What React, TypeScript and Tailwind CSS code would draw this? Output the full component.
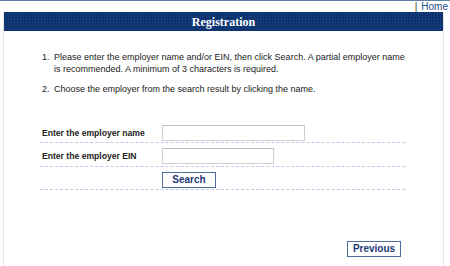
import React from "react";

export default function App() {
  return (
    <div className="w-[450px] h-[266px] overflow-hidden bg-white border-t border-[#5d7ca8] font-['Liberation_Sans',Arial,sans-serif]">
      <div className="h-[11px] flex justify-end items-center pr-[2px] text-[10px] leading-[11px]">
        <span className="text-[#333] mr-[4px]">|</span>
        <span className="text-[#1f4a8c]">Home</span>
      </div>
      <div className="ml-[3px] w-[441px] h-[254px] border-x border-[#e6e6e6] flex flex-col">
        <div className="h-[19px] bg-[#0d3371] bg-[radial-gradient(circle,#244a82_0.7px,transparent_0.9px)] bg-[length:3px_3px] flex items-center justify-center">
          <span className="text-white font-bold text-[12px] font-['Liberation_Serif',serif] leading-none">Registration</span>
        </div>
        <div className="pl-[38px] pt-[20px] text-[9px] leading-[12px] text-[#222]">
          <div className="flex">
            <span className="w-[12px]">1.</span>
            <span className="w-[352px]">Please enter the employer name and/or EIN, then click Search. A partial employer name is recommended. A minimum of 3 characters is required.</span>
          </div>
          <div className="flex mt-[8px]">
            <span className="w-[12px]">2.</span>
            <span>Choose the employer from the search result by clicking the name.</span>
          </div>
        </div>
        <div className="ml-[36px] w-[365px] mt-[28px] text-[8.6px] text-[#222]">
          <div className="flex items-center pt-[2px] pb-[1px] border-b border-dashed border-[#c4c6e8]">
            <span className="w-[122px] pl-[2px] font-bold">Enter the employer name</span>
            <div className="w-[143px] h-[16px] border border-[#d0d0d0] border-t-[#bdbdbd] bg-white" />
          </div>
          <div className="flex items-center pt-[5px] pb-[2px] border-b border-dashed border-[#c4c6e8]">
            <span className="w-[122px] pl-[2px] font-bold">Enter the employer EIN</span>
            <div className="w-[112px] h-[16px] border border-[#d0d0d0] border-t-[#bdbdbd] bg-white" />
          </div>
          <div className="flex items-center pt-[5px] pb-[1px] border-b border-dashed border-[#c4c6e8]">
            <span className="w-[122px]" />
            <div className="w-[54px] h-[16px] border border-[#4e6c9c] flex items-center justify-center text-[10px] font-bold text-[#1f3a78] leading-none">
              Search
            </div>
          </div>
        </div>
        <div className="flex justify-end mr-[42px] mt-[51px]">
          <div className="w-[54px] h-[16px] border border-[#4e6c9c] flex items-center justify-center text-[10px] font-bold text-[#1f3a78] leading-none">
            Previous
          </div>
        </div>
      </div>
    </div>
  );
}
